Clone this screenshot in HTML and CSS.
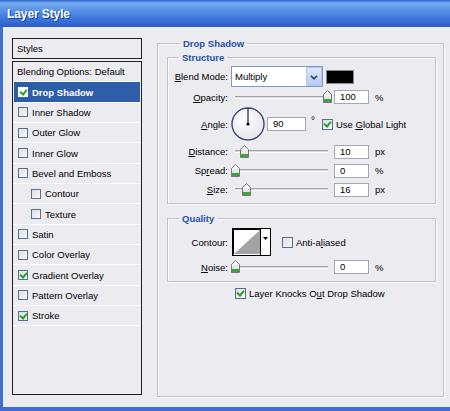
FILE: index.html
```html
<!DOCTYPE html>
<html>
<head>
<meta charset="utf-8">
<link rel="stylesheet" href="styles.css">
</head>
<body>
<svg width="0" height="0" class="defs" aria-hidden="true">
  <defs>
    <linearGradient id="tg" x1="0" y1="0" x2="0" y2="1"><stop offset="0" stop-color="#ffffff"/><stop offset="1" stop-color="#d6d6dc"/></linearGradient>
    <symbol id="thumb" viewBox="0 0 9 13">
      <path d="M4.5 0.5 L8.5 4.5 V12.5 H0.5 V4.5 Z" fill="url(#tg)" stroke="#77777d" stroke-width="1"/>
      <rect x="1" y="9" width="7" height="3" fill="#3aa63a"/>
    </symbol>
  </defs>
</svg>
<div class="window">
  <div class="titlebar"><span class="title">Layer Style</span></div>
  <div class="body">
    <div class="sidebar">
      <div class="styles-head">Styles</div>
      <ul class="style-list">
        <li class="row plain">Blending Options: Default</li>
        <li class="row selected"><span class="cb on"></span>Drop Shadow</li>
        <li class="row"><span class="cb"></span>Inner Shadow</li>
        <li class="row"><span class="cb"></span>Outer Glow</li>
        <li class="row"><span class="cb"></span>Inner Glow</li>
        <li class="row"><span class="cb"></span>Bevel and Emboss</li>
        <li class="row sub"><span class="cb"></span>Contour</li>
        <li class="row sub"><span class="cb"></span>Texture</li>
        <li class="row"><span class="cb"></span>Satin</li>
        <li class="row"><span class="cb"></span>Color Overlay</li>
        <li class="row"><span class="cb on"></span>Gradient Overlay</li>
        <li class="row"><span class="cb"></span>Pattern Overlay</li>
        <li class="row"><span class="cb on"></span>Stroke</li>
      </ul>
    </div>
    <div class="main">
      <div class="group outer">
        <div class="group-title">Drop Shadow</div>
        <div class="group inner structure">
          <div class="group-title">Structure</div>
          <div class="frow r-blend">
            <span class="lbl"><u>B</u>lend Mode:</span>
            <div class="select"><span class="sel-text">Multiply</span><span class="sel-btn"><svg width="16" height="19" viewBox="0 0 16 19"><path d="M4.5 7.5 L8 11 L11.5 7.5" fill="none" stroke="#27477f" stroke-width="2"/></svg></span></div>
            <span class="swatch"></span>
          </div>
          <div class="frow r-opacity">
            <span class="lbl"><u>O</u>pacity:</span>
            <div class="slider"><span class="track"></span><svg class="thumb" style="left:92px" width="9" height="13"><use href="#thumb"/></svg></div>
            <span class="num">100</span><span class="unit">%</span>
          </div>
          <div class="frow r-angle">
            <span class="lbl"><u>A</u>ngle:</span>
            <svg class="dial" width="34" height="34" viewBox="0 0 34 34">
              <defs><radialGradient id="dg" cx="40%" cy="35%" r="70%"><stop offset="0" stop-color="#ffffff"/><stop offset="1" stop-color="#e4e4ea"/></radialGradient></defs>
              <circle cx="17" cy="17" r="16" fill="url(#dg)" stroke="#3b4a6e" stroke-width="1.4"/>
              <line x1="17" y1="17" x2="17" y2="1" stroke="#000" stroke-width="1"/>
              <circle cx="17" cy="17" r="1.6" fill="#000"/>
            </svg>
            <span class="num num-angle">90</span><span class="deg">°</span>
            <span class="cb on cb-gl"></span><span class="cb-text">Use <u>G</u>lobal Light</span>
          </div>
          <div class="frow r-slide">
            <span class="lbl"><u>D</u>istance:</span>
            <div class="slider"><span class="track"></span><svg class="thumb" style="left:9px" width="9" height="13"><use href="#thumb"/></svg></div>
            <span class="num">10</span><span class="unit">px</span>
          </div>
          <div class="frow r-slide">
            <span class="lbl">Sp<u>r</u>ead:</span>
            <div class="slider"><span class="track"></span><svg class="thumb" style="left:0px" width="9" height="13"><use href="#thumb"/></svg></div>
            <span class="num">0</span><span class="unit">%</span>
          </div>
          <div class="frow r-slide">
            <span class="lbl"><u>S</u>ize:</span>
            <div class="slider"><span class="track"></span><svg class="thumb" style="left:11px" width="9" height="13"><use href="#thumb"/></svg></div>
            <span class="num">16</span><span class="unit">px</span>
          </div>
        </div>
        <div class="group inner quality">
          <div class="group-title">Quality</div>
          <div class="frow r-contour">
            <span class="lbl">Contour:</span>
            <svg class="contour" width="39" height="28" viewBox="0 0 39 28">
              <rect x="0.5" y="0.5" width="38" height="27" fill="#fff" stroke="#000"/>
              <path d="M1.5 1.5 H28 M1.5 1.5 V26.5" stroke="#000" stroke-width="1" fill="none"/>
              <polygon points="2,26 28,2 28,26" fill="#a3a3a7"/>
              <line x1="28.5" y1="1" x2="28.5" y2="27" stroke="#000"/>
              <polygon points="31,9 36,9 33.5,12" fill="#000"/>
            </svg>
            <span class="cb cb-aa"></span><span class="cb-text">Anti-a<u>l</u>iased</span>
          </div>
          <div class="frow r-slide r-noise">
            <span class="lbl"><u>N</u>oise:</span>
            <div class="slider"><span class="track"></span><svg class="thumb" style="left:0px" width="9" height="13"><use href="#thumb"/></svg></div>
            <span class="num">0</span><span class="unit">%</span>
          </div>
        </div>
        <div class="knock">
          <span class="cb on"></span><span class="cb-text">Layer Knocks O<u>u</u>t Drop Shadow</span>
        </div>
      </div>
    </div>
  </div>
</div>
</body>
</html>
```
FILE: styles.css
```css
* { box-sizing: border-box; margin: 0; padding: 0; }
body {
  margin: 0;
  background: #ecebf0;
  font-family: "Liberation Sans", Arial, sans-serif;
  font-size: 9.5px;
  color: #000;
}
.defs { position: absolute; width: 0; height: 0; overflow: hidden; }
u { text-decoration: underline; text-underline-offset: 1px; }
.window {
  width: 450px;
  height: 411px;
  display: flex;
  flex-direction: column;
  background: #ecebf0;
  overflow: hidden;
}
.titlebar {
  height: 27px;
  flex: none;
  background: linear-gradient(#2b63cf 0, #79acef 3px, #6aa0ec 6px, #4a86e2 14px, #3a74da 20px, #2a5dc4 27px);
  display: flex;
  align-items: center;
  padding-left: 7px;
}
.title {
  color: #fff;
  font-weight: bold;
  font-size: 12px;
  letter-spacing: -0.1px;
  text-shadow: 1px 1px 0 #143e92;
}
.body {
  flex: 1;
  display: flex;
  border-left: 3px solid #3f6fd0;
  border-bottom: 4px solid #3f6fd0;
}
/* sidebar */
.sidebar {
  width: 130px;
  margin: 11px 0 0 9px;
  display: flex;
  flex-direction: column;
  gap: 2px;
}
.styles-head {
  height: 21px;
  border: 1px solid #222;
  padding-left: 4px;
  display: flex;
  align-items: center;
}
.style-list {
  list-style: none;
  height: 334px;
  border: 1px solid #222;
}
.row {
  height: 20.35px;
  border-bottom: 1px solid #fbfbfd;
  display: flex;
  align-items: center;
  gap: 4px;
  padding-left: 5px;
}
.row.plain { padding-left: 4px; }
.row.sub { padding-left: 18px; }
.row.selected {
  background: #2f5ea9;
  color: #fff;
  font-weight: bold;
  margin: 0 1px;
  padding-left: 4px;
}
.cb {
  width: 10px;
  height: 10px;
  flex: none;
  border: 1px solid #5a6f8c;
  background: linear-gradient(135deg, #dcdce2, #fbfbfd);
  position: relative;
}
.row.selected .cb { background: #fff; border-color: #fff; }
.cb.on::after {
  content: "";
  position: absolute;
  left: 2px;
  top: 0px;
  width: 3px;
  height: 5px;
  border-right: 2px solid #22a322;
  border-bottom: 2px solid #22a322;
  transform: rotate(40deg);
}
/* main */
.main {
  margin: 16px 0 0 15px;
  width: 287px;
  height: 354px;
}
.group {
  border: 1px solid #c4c2c9;
  box-shadow: inset 1px 1px 0 #fafafc, 1px 1px 0 #fafafc;
}
.outer {
  width: 287px;
  height: 354px;
  padding: 0 7px 0 9px;
}
.group-title {
  width: max-content;
  margin: -7px 0 0 13px;
  padding: 0 3px;
  background: #ecebf0;
  color: #2553a5;
  font-weight: bold;
  line-height: 13px;
}
.inner { margin-top: 7px; }
.inner .group-title { margin-left: 11px; }
.structure { height: 147px; }
.quality { height: 64px; margin-top: 14px; }
.frow { display: flex; align-items: center; }
.lbl { width: 60px; text-align: right; margin-right: 3px; flex: none; }
.r-blend { height: 21px; margin-top: 2px; }
.select {
  width: 92px;
  height: 21px;
  border: 1px solid #7f9db9;
  background: #fff;
  display: flex;
  align-items: center;
  justify-content: space-between;
  padding-left: 3px;
}
.sel-btn {
  width: 16px;
  height: 19px;
  background: linear-gradient(#dce7fd, #b7cbf5);
  border: 1px solid #b4c6ea;
  display: flex;
}
.swatch {
  width: 28px;
  height: 14px;
  margin-left: 3px;
  background: #000;
  border: 1px solid #8a8a8a;
}
.r-opacity { height: 18px; margin-top: 1px; }
.r-slide { height: 19px; }
.slider {
  width: 101px;
  height: 14px;
  position: relative;
  display: flex;
  align-items: center;
  padding: 0 4px;
}
.track {
  flex: 1;
  height: 3px;
  border-top: 1px solid #a4a3a8;
  border-bottom: 1px solid #fff;
  background: #d9d8dd;
}
.thumb {
  position: absolute;
  top: 0;
  width: 9px;
  height: 13px;
}
.num {
  width: 35px;
  height: 14px;
  margin-left: 2px;
  border: 1px solid #a3a9b3;
  background: #fff;
  padding-left: 5px;
  line-height: 12px;
}
.unit { margin-left: 6px; }
.r-angle { height: 36px; }
.dial { margin-left: 0px; flex: none; }
.num-angle { width: 39px; margin-left: 2px; }
.deg { margin-left: 5px; align-self: flex-start; margin-top: 9px; font-size: 10px; }
.cb-gl { width: 11px; height: 11px; margin-left: 7px; }
.cb-text { margin-left: 3px; }
.r-contour { height: 28px; margin-top: 3px; }
.contour { margin-left: 1px; flex: none; }
.cb-aa { width: 11px; height: 11px; margin-left: 11px; }
.r-noise { height: 18px; margin-top: 2px; }
.knock {
  display: flex;
  align-items: center;
  height: 15px;
  margin-top: 4px;
  padding-left: 68px;
}
.knock .cb { width: 11px; height: 11px; }
```
